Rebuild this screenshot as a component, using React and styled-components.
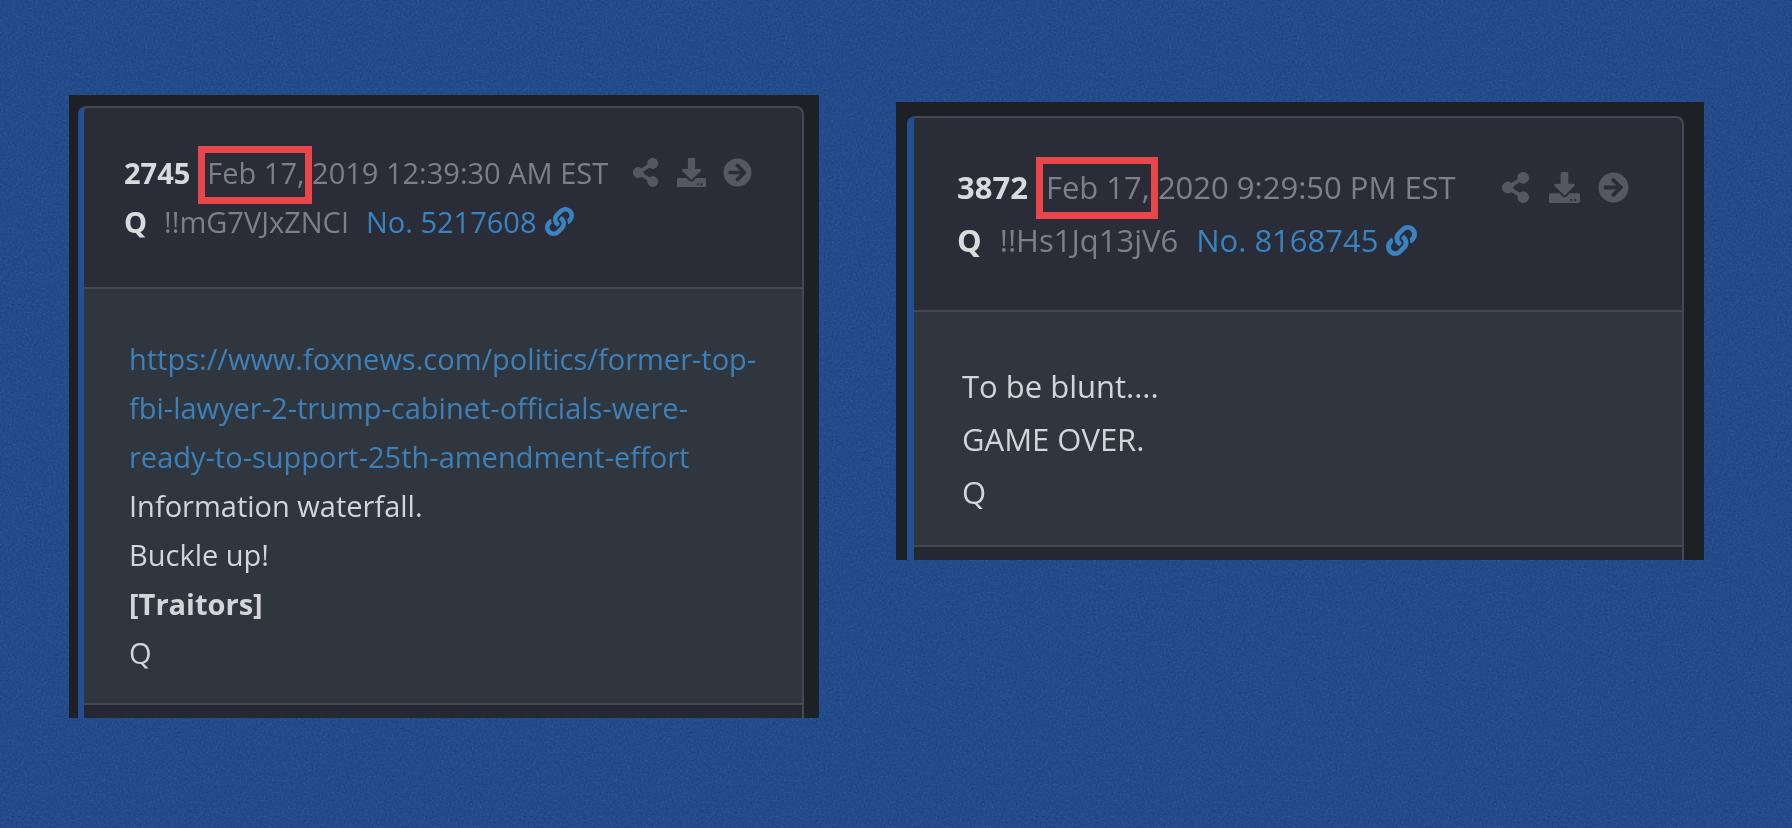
import React from 'react';
import styled, { createGlobalStyle, ThemeProvider } from 'styled-components';
import { FaShareAlt, FaDownload, FaArrowCircleRight, FaLink } from 'react-icons/fa';

const sizes = {
  small: { font: 29, line: 49, gap: 17, top: 11, left: 9, side: 15, stripe: 6, header: '40px 50px 41px 40px', body: '45px 40px 26px 45px', icons: 17, mark: '-7px -7px -12px -9px' },
  large: { font: 31, line: 53, gap: 18, top: 14, left: 11, side: 20, stripe: 7, header: '43px 53px 43px 43px', body: '48px 40px 26px 48px', icons: 18, mark: '-9px -8px -11px -10px' },
};

const posts = [
  {
    id: '2745',
    size: 'small',
    day: 'Feb 17,',
    time: '2019 12:39:30 AM EST',
    trip: '!!mG7VJxZNCI',
    number: 'No. 5217608',
    url: 'https://www.foxnews.com/politics/former-top-fbi-lawyer-2-trump-cabinet-officials-were-ready-to-support-25th-amendment-effort',
    lines: [{ text: 'Information waterfall.' }, { text: 'Buckle up!' }, { text: '[Traitors]', bold: true }, { text: 'Q' }],
  },
  {
    id: '3872',
    size: 'large',
    day: 'Feb 17,',
    time: '2020 9:29:50 PM EST',
    trip: '!!Hs1Jq13jV6',
    number: 'No. 8168745',
    lines: [{ text: 'To be blunt....' }, { text: 'GAME OVER.' }, { text: 'Q' }],
  },
];

const Post = ({ post }) => (
  <ThemeProvider theme={sizes[post.size]}>
    <Frame>
      <Card>
        <Header>
          <Row>
            <Meta>
              <Strong>{post.id}</Strong>
              <time>
                <Marked>{post.day}</Marked> {post.time}
              </time>
            </Meta>
            <Actions>
              <IconButton type="button" aria-label="Share"><FaShareAlt /></IconButton>
              <IconButton type="button" aria-label="Download"><FaDownload /></IconButton>
              <IconButton type="button" aria-label="Open"><FaArrowCircleRight /></IconButton>
            </Actions>
          </Row>
          <Meta>
            <Strong>Q</Strong>
            <span>{post.trip}</span>
            <NumberLink href="#">
              {post.number}
              <FaLink />
            </NumberLink>
          </Meta>
        </Header>
        <Body>
          {post.url && <Link href={post.url}>{post.url}</Link>}
          {post.lines.map((line) => (
            <Line key={line.text} $bold={line.bold}>{line.text}</Line>
          ))}
        </Body>
        <Footer />
      </Card>
    </Frame>
  </ThemeProvider>
);

const App = () => (
  <>
    <GlobalStyle />
    <Page>
      <Grain aria-hidden="true">
        <filter id="grain" x="0" y="0" width="100%" height="100%" colorInterpolationFilters="sRGB">
          <feTurbulence type="fractalNoise" baseFrequency="0.5" numOctaves="3" seed="4" />
          <feColorMatrix values="0.6 0.6 0 0 -0.1  0.6 0.6 0 0 -0.1  0.6 0.6 0 0 -0.1  0 0 0 0 1" />
        </filter>
        <rect width="100%" height="100%" filter="url(#grain)" />
      </Grain>
      <Board>
        {posts.map((post) => (
          <Post key={post.id} post={post} />
        ))}
      </Board>
    </Page>
  </>
);

const GlobalStyle = createGlobalStyle`
  * {
    box-sizing: border-box;
  }

  body {
    margin: 0;
    background: #234b8b;
    font-family: 'Open Sans', 'Noto Sans', sans-serif;
  }
`;

const Page = styled.main`
  position: relative;
  min-height: 100vh;
  background: #234b8b;
`;

/* paper texture over the blue */
const Grain = styled.svg`
  position: absolute;
  inset: 0;
  width: 100%;
  height: 100%;
  opacity: 0.3;
  mix-blend-mode: soft-light;
`;

const Board = styled.div`
  position: relative;
  display: grid;
  grid-template-columns: 750fr 808fr;
  align-items: start;
  gap: 77px;
  padding: 95px 88px 40px 69px;
`;

const Frame = styled.article`
  padding: ${({ theme }) => `${theme.top}px ${theme.side}px 0 ${theme.left}px`};
  background: #1d2125;
  font-size: ${({ theme }) => theme.font}px;
  line-height: ${({ theme }) => theme.line}px;

  & + & {
    margin-top: 7px;
  }
`;

const Card = styled.div`
  border: 2px solid #454851;
  border-left: ${({ theme }) => theme.stripe}px solid #244e92;
  border-bottom: 0;
  border-radius: 8px 8px 0 0;
  background: #2a2c37;
  overflow: hidden;
`;

const Header = styled.header`
  padding: ${({ theme }) => theme.header};
  color: #7e7f8b;
`;

const Row = styled.div`
  display: flex;
  align-items: center;
  justify-content: space-between;
`;

const Meta = styled.div`
  display: flex;
  gap: ${({ theme }) => theme.gap}px;
  white-space: nowrap;
`;

const Strong = styled.strong`
  color: #d9dadc;
  font-weight: 700;
`;

const Marked = styled.span`
  position: relative;

  &::after {
    content: '';
    position: absolute;
    inset: ${({ theme }) => theme.mark};
    border: 7px solid #e8464b;
  }
`;

const Actions = styled.div`
  display: flex;
  gap: ${({ theme }) => theme.icons}px;
`;

const IconButton = styled.button`
  display: flex;
  padding: 0;
  border: 0;
  background: none;
  color: #555762;
  font-size: inherit;
  cursor: pointer;

  svg {
    width: auto;
  }
`;

const NumberLink = styled.a`
  display: flex;
  align-items: center;
  gap: 8px;
  color: #3a83c1;
  text-decoration: none;
`;

const Body = styled.div`
  padding: ${({ theme }) => theme.body};
  border: solid #454851;
  border-width: 2px 0;
  background: #2f363e;
  color: #d3d5d8;
`;

const Link = styled.a`
  display: block;
  color: #3d80ba;
  text-decoration: none;
`;

const Line = styled.p`
  margin: 0;
  font-weight: ${({ $bold }) => ($bold ? 700 : 400)};
`;

const Footer = styled.footer`
  height: 13px;
  background: #252832;
`;

export default App;
